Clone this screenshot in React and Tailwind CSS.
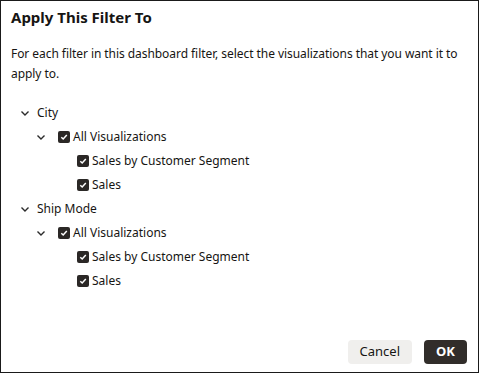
const TREE = [
  {
    name: 'City',
    items: ['Sales by Customer Segment', 'Sales'],
  },
  {
    name: 'Ship Mode',
    items: ['Sales by Customer Segment', 'Sales'],
  },
]

function Chevron() {
  return (
    <svg width="10" height="10" viewBox="0 0 10 10" className="shrink-0">
      <path d="M1.5 3.5 L5 7 L8.5 3.5" fill="none" stroke="#2b2b2b" strokeWidth="1.4" />
    </svg>
  )
}

function Check() {
  return (
    <span className="w-[12px] h-[12px] rounded-[2px] bg-[#2b2826] flex items-center justify-center shrink-0">
      <svg width="8" height="8" viewBox="0 0 8 8">
        <path d="M1.3 4.2 L3.2 6 L6.8 2" fill="none" stroke="#fff" strokeWidth="1.5" />
      </svg>
    </span>
  )
}

export default function App() {
  return (
    <div
      className="w-[479px] h-[373px] border border-[#1a1a1a] bg-white flex flex-col text-[#161513]"
      style={{ fontFamily: '"Noto Sans", "Open Sans", sans-serif' }}
    >
      <h1 className="px-[10px] pt-[5px] text-[15px] font-bold leading-[22px]">Apply This Filter To</h1>
      <p className="pl-[10px] pr-[6px] mt-[16px] text-[12px] leading-[20px] tracking-[-0.06px]">
        For each filter in this dashboard filter, select the visualizations that you want it to apply to.
      </p>

      <div className="mt-[17px] flex flex-col text-[12px]">
        {TREE.map((group) => (
          <div key={group.name} className="flex flex-col">
            <div className="h-[24px] flex items-center pl-[19px] gap-[7px]">
              <Chevron />
              <span>{group.name}</span>
            </div>
            <div className="h-[24px] flex items-center pl-[35px]">
              <Chevron />
              <span className="ml-[12px]"><Check /></span>
              <span className="ml-[3px]">All Visualizations</span>
            </div>
            {group.items.map((item) => (
              <div key={item} className="h-[24px] flex items-center pl-[76px]">
                <Check />
                <span className="ml-[3px]">{item}</span>
              </div>
            ))}
          </div>
        ))}
      </div>

      <div className="mt-auto mb-[8px] flex justify-end gap-[12px] pr-[11px]">
        <button className="h-[24px] px-[12px] rounded-[4px] bg-[#f0efed] text-[13px] text-[#161513]">Cancel</button>
        <button className="h-[24px] w-[43px] rounded-[4px] bg-[#312d2a] text-[13px] font-bold text-white">OK</button>
      </div>
    </div>
  )
}
